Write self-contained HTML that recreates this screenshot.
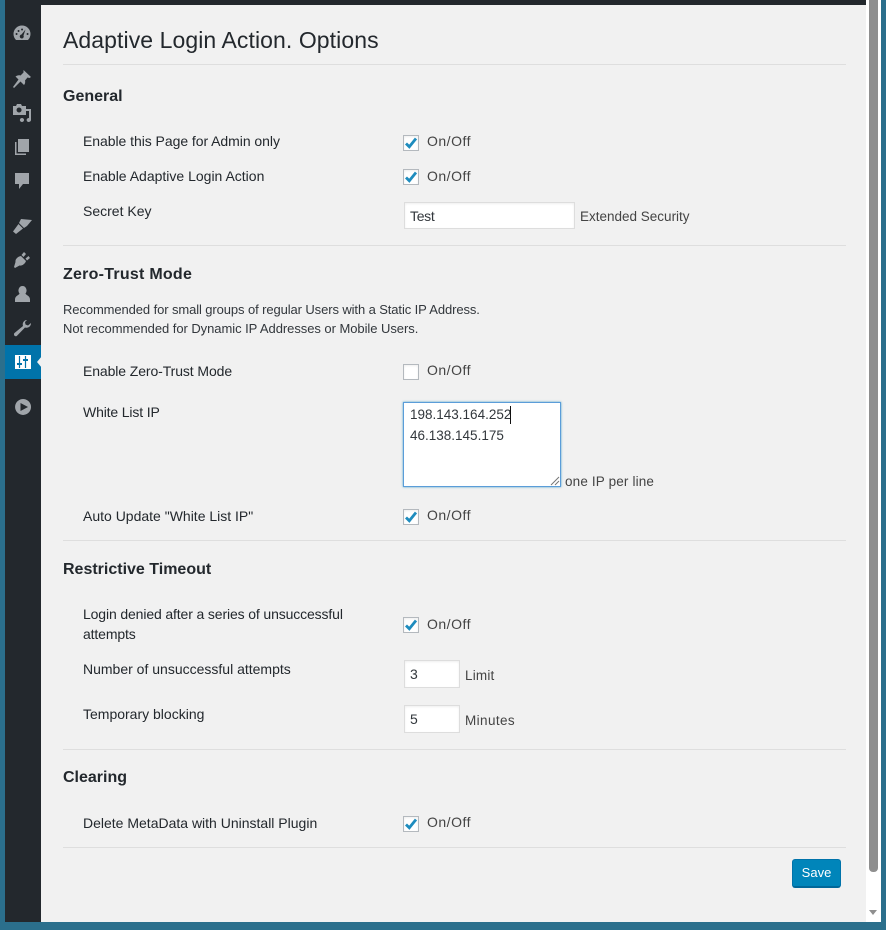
<!DOCTYPE html>
<html><head><meta charset="utf-8"><style>
html,body{margin:0;padding:0;width:886px;height:930px;overflow:hidden;background:#2b6f8c;font-family:"Liberation Sans",sans-serif;color:#32373c}
.a{position:absolute;white-space:nowrap}
.t{font-size:14px;line-height:20px;color:#23282d}
.o{font-size:14px;line-height:20px;color:#444}
.on{letter-spacing:.5px}
h1,h2{margin:0;font-weight:normal;position:absolute;white-space:nowrap;color:#23282d}
h2{font-size:16px;font-weight:bold;line-height:22px;left:63px}
.hr{position:absolute;left:63px;width:783px;height:1px;background:#dedede}
.c{position:absolute;width:14px;height:14px;left:403px;border:1px solid #b4b9be;background:#fff;box-shadow:inset 0 1px 2px rgba(0,0,0,.07)}
.c svg{position:absolute;left:0;top:0}
.i{position:absolute;background:#fff;border:1px solid #ddd;box-shadow:inset 0 1px 2px rgba(0,0,0,.07);font-size:14px;line-height:20px;color:#32373c;box-sizing:border-box;padding:3px 5px}
</style></head><body>
<div class="a" style="left:5px;top:0;width:861px;height:5px;background:#23282d"></div>
<div class="a" style="left:5px;top:5px;width:36px;height:917px;background:#23282d"></div>
<div class="a" style="left:41px;top:5px;width:825px;height:917px;background:#f1f1f1"></div>
<div class="a" style="left:866px;top:0;width:15px;height:922px;background:#fff"></div>
<div class="a" style="left:869px;top:0;width:9px;height:872px;background:#8f8f8f;border-radius:0 0 4px 4px"></div>
<div class="a" style="left:869px;top:910px;width:0;height:0;border-left:4.5px solid transparent;border-right:4.5px solid transparent;border-top:5px solid #8f8f8f"></div>
<div class="a" style="left:0;top:922px;width:886px;height:8px;background:#2b6f8c"></div>
<div class="a" style="left:5px;top:345px;width:36px;height:34px;background:#0073aa"></div>
<div class="a" style="left:37px;top:356px;width:0;height:0;border-top:6px solid transparent;border-bottom:6px solid transparent;border-right:5px solid #f1f1f1"></div>

<svg class="a" style="left:0;top:0" width="41" height="420" viewBox="0 0 41 420" fill="#a0a5aa">
<path fill-rule="evenodd" d="M16 40A8.500 8.500 0 1 1 28 40ZM25.500 29.500L21.500 34.500A2 2 0 1 0 23.500 35.500ZM16.500 33a1 1 0 1 0 .1 0zM18.500 30a1 1 0 1 0 .1 0zM22 28.500a1 1 0 1 0 .1 0zM27.500 33a1 1 0 1 0 .1 0z"/>
<path d="M23.500 70L31 77L29.500 78L27.500 77.500L25 80.500C25.500 82 25 84 24 85L20.500 81.500L14 88L13 87L18.500 79.500L15.500 76.500C17 75.500 18.500 75 20.500 75.500L23.500 72.500Z"/>
<path fill-rule="evenodd" d="M13 106h3l1-2h4l1 2h4v9H13zM19 107.500a2.500 2.500 0 1 0 .1 0z"/>
<path d="M24 109h7v11a2.200 2 0 1 1-2-2v-7h-5zM22 118a2.100 2 0 1 1-.1 0z"/>
<path d="M18 139h11v13H18z"/>
<path d="M15 142h1.500v11.500H26v1.500H15z"/>
<path d="M15 173h14v11h-6l-4 5v-5h-4z"/>
<path d="M21 219L32 220L27 226L24 228L19 223ZM18.500 224L23 228.500L16 234L13 231.500Z"/>
<path d="M21 256L26 261C25 264 22 266 19.500 265.500L15 268L14 267L15.500 262C15 259 18 256.500 21 256ZM24 252L26 254L23.500 257L21.500 255ZM28.500 256L30 258L27 260.500L25.500 258.500Z"/>
<path d="M22.500 286a4 4.500 0 0 1 3 7.500c0 1.500 4.500 2 4.500 6v2.500H15v-2.500c0-4 4.500-4.500 4.500-6a4 4.500 0 0 1 3-7.500z"/>
<path d="M27 320c-3 0-5 3-4 6L14.500 333c-1 1-.5 3 1 3.200.7 0 1 0 1.500-.5L25 327.500c3 1 6-1 6-4.500l-3 2.500-2.500-1-.5-2.500z"/>
<rect x="15" y="355" width="16" height="14" fill="#fff"/>
<path d="M19.500 356v12M25.500 356v12" stroke="#0073aa" stroke-width="1.200"/><path d="M17 364h5M23 360h5" stroke="#0073aa" stroke-width="2"/>
<path fill-rule="evenodd" d="M23 399a8 8 0 1 0 .1 0zM20.500 403l7.500 4-7.500 4z"/>
</svg>

<h1 style="left:63px;top:26px;font-size:23px;line-height:28px;letter-spacing:.08px">Adaptive Login Action. Options</h1>
<div class="hr" style="top:64px"></div>
<h2 style="top:86px">General</h2>
<div class="a t" style="left:83px;top:131px;letter-spacing:-.05px">Enable this Page for Admin only</div>
<div class="c" style="top:135px"><svg width="14" height="14" viewBox="0 0 14 14"><path d="M2 7.500l3.300 3.300L12 2.500" fill="none" stroke="#1e8cbe" stroke-width="2.800"/></svg></div><div class="a o on" style="left:427px;top:131px">On/Off</div>
<div class="a t" style="left:83px;top:166px">Enable Adaptive Login Action</div>
<div class="c" style="top:169px"><svg width="14" height="14" viewBox="0 0 14 14"><path d="M2 7.500l3.300 3.300L12 2.500" fill="none" stroke="#1e8cbe" stroke-width="2.800"/></svg></div><div class="a o on" style="left:427px;top:166px">On/Off</div>
<div class="a t" style="left:83px;top:201px">Secret Key</div>
<div class="i" style="left:404px;top:202px;width:171px;height:27px;letter-spacing:-.3px">Test</div><div class="a o" style="left:580px;top:207px;font-size:13.500px">Extended Security</div>
<div class="hr" style="top:245px"></div>
<h2 style="top:264px;letter-spacing:.25px">Zero-Trust Mode</h2>
<div class="a" style="left:63px;top:300px;font-size:13px;line-height:19px;color:#32373c"><span style="letter-spacing:-.1px">Recommended for small groups of regular Users with a Static IP Address.</span><br><span style="letter-spacing:-.05px">Not recommended for Dynamic IP Addresses or Mobile Users.</span></div>
<div class="a t" style="left:83px;top:361px;letter-spacing:-.1px">Enable Zero-Trust Mode</div>
<div class="c" style="top:364px"></div><div class="a o on" style="left:427px;top:360px">On/Off</div>
<div class="a t" style="left:83px;top:402px;letter-spacing:-.15px">White List IP</div>
<div class="a" style="left:403px;top:402px;width:158px;height:85px;box-sizing:border-box;background:#fff;border:1px solid #5b9dd9;box-shadow:0 0 2px rgba(30,140,190,.8)"></div>
<div class="a" style="left:410px;top:404px;font-size:13.500px;line-height:21px;color:#32373c">198.143.164.252<br>46.138.145.175</div>
<div class="a" style="left:510px;top:406px;width:1px;height:18px;background:#111"></div>
<svg class="a" style="left:550px;top:476px" width="10" height="10"><path d="M1 9L9 1M5 9L9 5" stroke="#777" stroke-width="1"/></svg>
<div class="a o" style="left:565px;top:472px;font-size:13.500px;letter-spacing:.15px">one IP per line</div>
<div class="a t" style="left:83px;top:506px">Auto Update "White List IP"</div>
<div class="c" style="top:509px"><svg width="14" height="14" viewBox="0 0 14 14"><path d="M2 7.500l3.300 3.300L12 2.500" fill="none" stroke="#1e8cbe" stroke-width="2.800"/></svg></div><div class="a o on" style="left:427px;top:505px">On/Off</div>
<div class="hr" style="top:540px"></div>
<h2 style="top:559px">Restrictive Timeout</h2>
<div class="a t" style="left:83px;top:604px;letter-spacing:-.13px">Login denied after a series of unsuccessful<br>attempts</div>
<div class="c" style="top:617px"><svg width="14" height="14" viewBox="0 0 14 14"><path d="M2 7.500l3.300 3.300L12 2.500" fill="none" stroke="#1e8cbe" stroke-width="2.800"/></svg></div><div class="a o on" style="left:427px;top:614px">On/Off</div>
<div class="a t" style="left:83px;top:659px">Number of unsuccessful attempts</div>
<div class="i" style="left:404px;top:660px;width:56px;height:28px">3</div><div class="a o" style="left:465px;top:666px;font-size:13.500px;letter-spacing:.2px">Limit</div>
<div class="a t" style="left:83px;top:704px">Temporary blocking</div>
<div class="i" style="left:404px;top:705px;width:56px;height:28px">5</div><div class="a o" style="left:465px;top:711px;font-size:13.500px;letter-spacing:.4px">Minutes</div>
<div class="hr" style="top:749px"></div>
<h2 style="top:767px">Clearing</h2>
<div class="a t" style="left:83px;top:813px">Delete MetaData with Uninstall Plugin</div>
<div class="c" style="top:816px"><svg width="14" height="14" viewBox="0 0 14 14"><path d="M2 7.500l3.300 3.300L12 2.500" fill="none" stroke="#1e8cbe" stroke-width="2.800"/></svg></div><div class="a o on" style="left:427px;top:812px">On/Off</div>
<div class="hr" style="top:847px"></div>
<div class="a" style="left:792px;top:859px;width:49px;height:29px;box-sizing:border-box;background:#0085ba;border:1px solid #0073aa;border-bottom:2px solid #006799;border-radius:3px;color:#fff;font-size:13px;line-height:26px;text-align:center">Save</div>
</body></html>
